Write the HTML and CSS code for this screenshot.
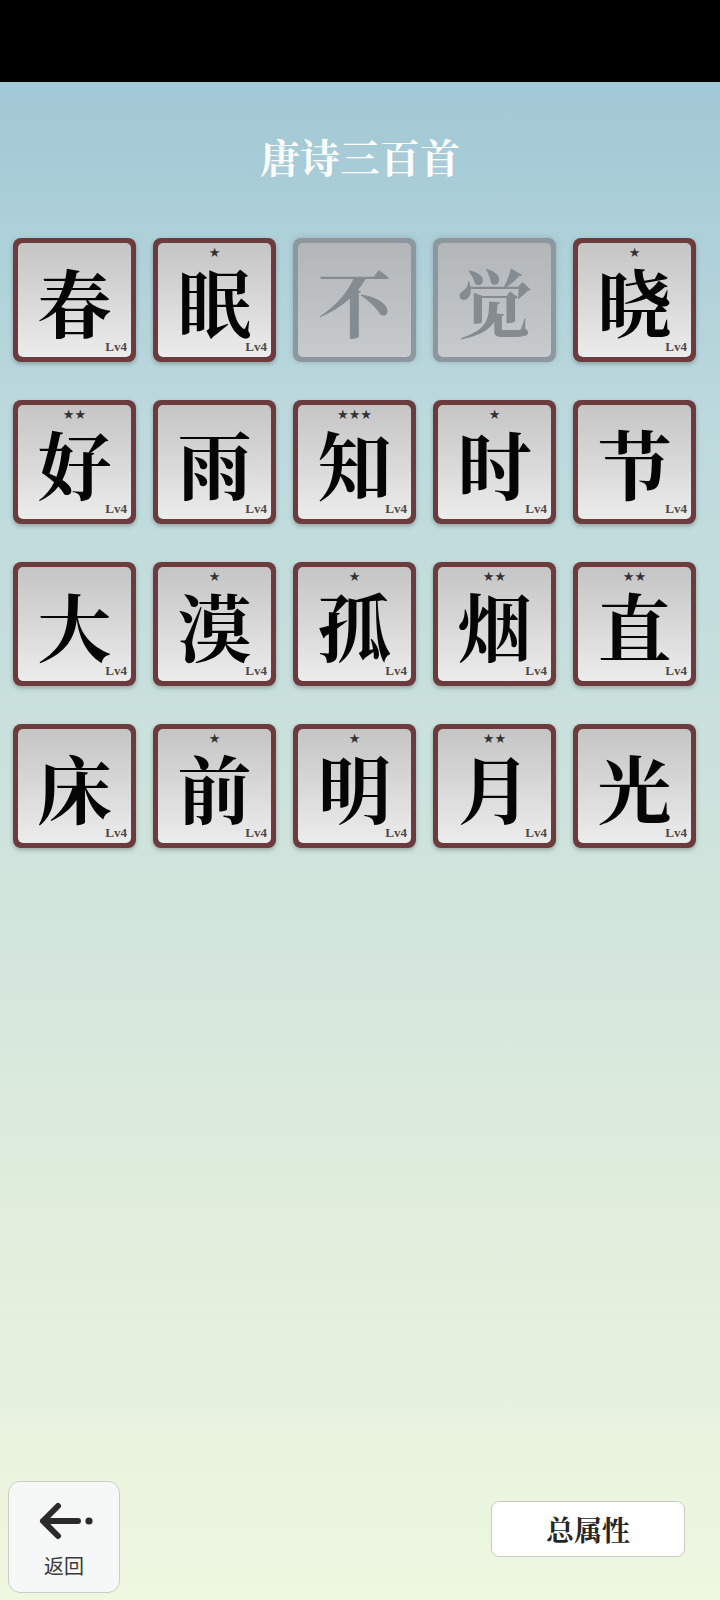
FILE: index.html
```html
<!DOCTYPE html>
<html lang="zh">
<head>
<meta charset="utf-8">
<title>唐诗三百首</title>
<link rel="stylesheet" href="styles.css">
</head>
<body>
<div class="page">
  <div class="statusbar"></div>
  <main class="content">
    <h1 class="title">唐诗三百首</h1>
    <div class="grid">
      <div class="tile"><div class="face"><span class="stars"></span><span class="ch">春</span><span class="lv">Lv4</span></div></div>
      <div class="tile"><div class="face"><span class="stars">★</span><span class="ch">眠</span><span class="lv">Lv4</span></div></div>
      <div class="tile off"><div class="face"><span class="stars"></span><span class="ch">不</span><span class="lv"></span></div></div>
      <div class="tile off"><div class="face"><span class="stars"></span><span class="ch">觉</span><span class="lv"></span></div></div>
      <div class="tile"><div class="face"><span class="stars">★</span><span class="ch">晓</span><span class="lv">Lv4</span></div></div>

      <div class="tile"><div class="face"><span class="stars">★★</span><span class="ch">好</span><span class="lv">Lv4</span></div></div>
      <div class="tile"><div class="face"><span class="stars"></span><span class="ch">雨</span><span class="lv">Lv4</span></div></div>
      <div class="tile"><div class="face"><span class="stars">★★★</span><span class="ch">知</span><span class="lv">Lv4</span></div></div>
      <div class="tile"><div class="face"><span class="stars">★</span><span class="ch">时</span><span class="lv">Lv4</span></div></div>
      <div class="tile"><div class="face"><span class="stars"></span><span class="ch">节</span><span class="lv">Lv4</span></div></div>

      <div class="tile"><div class="face"><span class="stars"></span><span class="ch">大</span><span class="lv">Lv4</span></div></div>
      <div class="tile"><div class="face"><span class="stars">★</span><span class="ch">漠</span><span class="lv">Lv4</span></div></div>
      <div class="tile"><div class="face"><span class="stars">★</span><span class="ch">孤</span><span class="lv">Lv4</span></div></div>
      <div class="tile"><div class="face"><span class="stars">★★</span><span class="ch">烟</span><span class="lv">Lv4</span></div></div>
      <div class="tile"><div class="face"><span class="stars">★★</span><span class="ch">直</span><span class="lv">Lv4</span></div></div>

      <div class="tile"><div class="face"><span class="stars"></span><span class="ch">床</span><span class="lv">Lv4</span></div></div>
      <div class="tile"><div class="face"><span class="stars">★</span><span class="ch">前</span><span class="lv">Lv4</span></div></div>
      <div class="tile"><div class="face"><span class="stars">★</span><span class="ch">明</span><span class="lv">Lv4</span></div></div>
      <div class="tile"><div class="face"><span class="stars">★★</span><span class="ch">月</span><span class="lv">Lv4</span></div></div>
      <div class="tile"><div class="face"><span class="stars"></span><span class="ch">光</span><span class="lv">Lv4</span></div></div>
    </div>
    <div class="spacer"></div>
    <footer class="footer">
      <button class="back">
        <svg class="back-icon" width="56" height="38" viewBox="0 0 56 38">
          <path d="M20 4 L5 19 L20 34 M5 19 L40 19" fill="none" stroke="#2b2b2b" stroke-width="6" stroke-linecap="round" stroke-linejoin="round"/>
          <circle cx="51" cy="19" r="3.6" fill="#2b2b2b"/>
        </svg>
        <span class="back-label">返回</span>
      </button>
      <button class="stats">总属性</button>
    </footer>
  </main>
</div>
</body>
</html>
```

FILE: styles.css
```css
* { box-sizing: border-box; }
html, body { margin: 0; padding: 0; }
body {
  width: 720px;
  height: 1600px;
  font-family: "Noto Serif CJK SC", "Noto Sans CJK SC", serif;
}
.page {
  display: flex;
  flex-direction: column;
  height: 1600px;
}
.statusbar {
  height: 82px;
  background: #000;
  flex: none;
}
.content {
  flex: 1;
  display: flex;
  flex-direction: column;
  background: linear-gradient(to bottom, #a1c8d5 0%, #bcd9dd 22%, #d0e4dc 52%, #e3efdd 78%, #eef7e0 100%);
}
.title {
  margin: 0;
  padding-top: 48px;
  height: 156px;
  text-align: center;
  font-size: 40px;
  line-height: 52px;
  font-weight: 700;
  color: #fbfdfd;
}
.grid {
  display: grid;
  grid-template-columns: repeat(5, 123px);
  grid-auto-rows: 124px;
  column-gap: 17px;
  row-gap: 38px;
  padding-left: 13px;
}
.tile {
  background: #6c3b3d;
  border-radius: 8px;
  padding: 5px;
  box-shadow: 0 2px 4px rgba(40, 30, 30, 0.3);
}
.face {
  height: 100%;
  border-radius: 5px;
  background: linear-gradient(to bottom, #c5c5c5 0%, #d6d6d6 45%, #ececec 100%);
  display: flex;
  flex-direction: column;
  align-items: center;
  padding: 3px 4px 3px;
}
.stars {
  height: 14px;
  font-family: "DejaVu Sans", sans-serif;
  font-size: 13px;
  line-height: 14px;
  color: #333;
}
.ch {
  height: 80px;
  font-family: "Noto Serif CJK SC", "Noto Sans CJK SC", serif;
  font-weight: 700;
  font-size: 74px;
  line-height: 80px;
  color: #050505;
}
.lv {
  align-self: flex-end;
  height: 13px;
  font-family: "Liberation Serif", serif;
  font-weight: 700;
  font-size: 13px;
  line-height: 13px;
  color: #4a4a4a;
}
.tile.off {
  background: #8d989e;
  box-shadow: 0 0 5px rgba(120, 140, 150, 0.5);
}
.tile.off .face {
  background: linear-gradient(to bottom, #b3b6b9 0%, #bdc0c3 50%, #c8cbcd 100%);
}
.tile.off .ch {
  color: #858c91;
}
.spacer { flex: 1; }
.footer {
  display: flex;
  justify-content: space-between;
  align-items: flex-end;
  padding: 0 35px 7px 8px;
}
.back {
  width: 112px;
  height: 112px;
  border: 1.5px solid #c9cfc6;
  border-radius: 12px;
  background: #f6f7f7;
  display: flex;
  flex-direction: column;
  align-items: center;
  padding: 20px 0 0 0;
  font-family: "Noto Sans CJK SC", sans-serif;
  cursor: pointer;
}
.back-icon { display: block; margin-left: 4px; }
.back-label {
  margin-top: 14px;
  font-size: 20px;
  line-height: 24px;
  color: #3a3a3a;
}
.stats {
  width: 194px;
  height: 56px;
  margin-bottom: 36px;
  border: 1.5px solid #c8ccc6;
  border-radius: 8px;
  background: #ffffff;
  font-family: "Noto Serif CJK SC", "Noto Sans CJK SC", serif;
  font-weight: 700;
  font-size: 28px;
  color: #262626;
  cursor: pointer;
}
```
